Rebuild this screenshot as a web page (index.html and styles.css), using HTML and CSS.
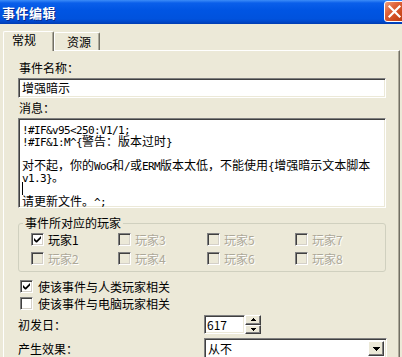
FILE: index.html
```html
<!DOCTYPE html>
<html>
<head>
<meta charset="utf-8">
<link rel="stylesheet" href="styles.css">
</head>
<body>
<div class="window">
  <div class="titlebar">
    <span class="title">事件编辑</span>
    <span class="close"><svg width="21" height="21" viewBox="0 0 21 21"><path d="M5.5 5.5 L15.5 15.5 M15.5 5.5 L5.5 15.5" stroke="#fff" stroke-width="2.2" stroke-linecap="square"/></svg></span>
  </div>
  <div class="body">
    <div class="tabs">
      <div class="tab active">常规</div>
      <div class="tab">资源</div>
    </div>
    <div class="panel">
      <div class="label">事件名称：</div>
      <div class="field input">增强暗示</div>
      <div class="label">消息：</div>
      <div class="field memo"><div class="ln"><span class="a">!#IF&amp;v95&lt;250:V1/1;</span></div><div class="ln"><span class="a">!#IF&amp;1:M^{</span>警告：版本过时<span class="a">}</span></div><div class="ln"></div><div class="ln">对不起，你的<span class="a">WoG</span>和<span class="a">/</span>或<span class="a">ERM</span>版本太低，不能使用<span class="a">{</span>增强暗示文本脚本</div><div class="ln"><span class="a">v1.3}</span>。</div><div class="ln"><span class="caret"></span></div><div class="ln">请更新文件。<span class="a">^;</span></div></div>
      <fieldset class="group">
        <legend>事件所对应的玩家</legend>
        <div class="grid">
          <label class="cb"><span class="box checked"><svg width="7" height="7" viewBox="0 0 7 7"><path d="M0 2 L0 4.5 L2 6.5 L3 6.5 L7 2.5 L7 0 L2.5 4.5 Z" fill="#000"/></svg></span>玩家1</label>
          <label class="cb dis"><span class="box"></span>玩家3</label>
          <label class="cb dis"><span class="box"></span>玩家5</label>
          <label class="cb dis"><span class="box"></span>玩家7</label>
          <label class="cb dis"><span class="box"></span>玩家2</label>
          <label class="cb dis"><span class="box"></span>玩家4</label>
          <label class="cb dis"><span class="box"></span>玩家6</label>
          <label class="cb dis"><span class="box"></span>玩家8</label>
        </div>
      </fieldset>
      <label class="cb solo first"><span class="box checked"><svg width="7" height="7" viewBox="0 0 7 7"><path d="M0 2 L0 4.5 L2 6.5 L3 6.5 L7 2.5 L7 0 L2.5 4.5 Z" fill="#000"/></svg></span>使该事件与人类玩家相关</label>
      <label class="cb solo"><span class="box"></span>使该事件与电脑玩家相关</label>
      <div class="row r1">
        <span class="rlabel">初发日：</span>
        <div class="spin">
          <div class="field num">617</div>
          <div class="spinbtns">
            <span class="sb"><svg width="5" height="3" viewBox="0 0 5 3"><path d="M2 0h1v1h1v1h1v1H0V2h1V1h1z" fill="#000"/></svg></span>
            <span class="sb"><svg width="5" height="3" viewBox="0 0 5 3"><path d="M0 0h5v1H4v1H3v1H2V2H1V1H0z" fill="#000"/></svg></span>
          </div>
        </div>
      </div>
      <div class="row r2">
        <span class="rlabel">产生效果：</span>
        <div class="field combo"><span class="ctext">从不</span><span class="dd"><svg width="7" height="4" viewBox="0 0 7 4"><path d="M0 0h7v1H6v1H5v1H4v1H3V3H2V2H1V1H0z" fill="#000"/></svg></span></div>
      </div>
    </div>
  </div>
</div>
</body>
</html>
```
FILE: styles.css
```css
* { box-sizing: border-box; }
html, body { margin: 0; padding: 0; }
body {
  width: 402px; height: 357px; overflow: hidden;
  font-family: "Noto Sans CJK SC", "Liberation Sans", sans-serif;
  font-size: 12px; color: #000;
  background: #ECE9D8;
}
.window { width: 402px; height: 357px; overflow: hidden; background: #ECE9D8; }
.titlebar {
  height: 24px; position: relative;
  background: linear-gradient(#3C8CF8 0px, #0A5FEA 3px, #0055E3 10px, #0052DD 19px, #0046C8 22px, #003BB0 24px);
  display: flex; align-items: center;
}
.title {
  color: #fff; font-weight: bold; font-size: 13px; line-height: 16px;
  margin-left: 2px; margin-top: 1px; letter-spacing: 0.5px;
  text-shadow: 1px 1px 0 #0A2A8A;
}
.close {
  position: absolute; left: 384px; top: 1px; width: 21px; height: 21px;
  border: 1px solid #fff; border-radius: 3px;
  background: linear-gradient(135deg, #EFA07D 0%, #E0623A 35%, #CC4A1E 70%, #B83A12 100%);
  display: flex; align-items: center; justify-content: center;
}
.close svg { position: absolute; left: -1px; top: -1px; }
.tabs { display: flex; align-items: flex-end; height: 26px; padding-left: 3px; position: relative; z-index: 1; }
.tab {
  height: 18px; line-height: 16px;
  border-left: 1px solid #fff; border-top: 1px solid #fff; border-right: 1px solid #716F64;
  border-radius: 2px 2px 0 0;
  box-shadow: inset -1px 0 0 #ACA899;
  text-align: center;
}
.tab:nth-child(2) { width: 46px; padding-left: 4px; padding-top: 1px; }
.tab.active {
  width: 51px; height: 20px; margin-bottom: -1px; background: #ECE9D8;
  padding-right: 9px; line-height: 15px;
}
.panel {
  height: 307px; width: 397px; margin-left: 3px;
  border-top: 1px solid #fff; border-left: 1px solid #fff; border-right: 1px solid #716F64;
  box-shadow: inset -1px 0 0 #ACA899;
  padding: 10px 0 0 14px;
}
.label { line-height: 14px; height: 14px; margin-left: 1px; }
.field {
  background: #fff;
  border: 1px solid; border-color: #808080 #fff #fff #808080;
  box-shadow: inset 1px 1px 0 #404040, inset -1px -1px 0 #ECE9D8;
}
.input { width: 368px; height: 20px; margin: 3px 0 3px 0; padding: 2px 0 0 3px; line-height: 14px; }
.memo { width: 368px; height: 90px; margin-top: 3px; padding: 4px 0 0 3px; white-space: pre; overflow: hidden; }
.ln { height: 12px; line-height: 12px; }
.a { font-family: "DejaVu Sans Mono", "Liberation Mono", monospace; font-size: 11px; letter-spacing: -0.62px; }
.caret { display: inline-block; width: 1px; height: 13px; background: #000; vertical-align: top; margin-top: -1px; }
.group {
  margin: 8px 0 0 0; width: 368px; height: 56px; padding: 0;
  border: 1px solid #D0D0BF; border-radius: 3px;
}
.group legend { padding: 0 2px; margin-left: 4px; line-height: 14px; }
.grid { display: grid; grid-template-columns: 87px 89px 88px 60px; row-gap: 6px; margin: 3px 0 0 12px; }
.cb { display: flex; align-items: center; height: 13px; line-height: 13px; }
.box {
  width: 13px; height: 13px; flex: none; margin-right: 4px;
  border: 1px solid; border-color: #808080 #fff #fff #808080;
  box-shadow: inset 1px 1px 0 #404040, inset -1px -1px 0 #D4D0C8;
  background: #fff; display: flex; align-items: center; justify-content: center;
}
.dis { color: #ACA899; text-shadow: 1px 1px 0 #fff; }
.dis .box { background: #ECE9D8; }
.solo { margin-left: 2px; }
.solo .box { margin-right: 5px; }
.first { margin-top: 8px; }
.solo + .solo { margin-top: 4px; }
.row { display: flex; align-items: center; }
.rlabel { width: 186px; }
.r1 { margin-top: 5px; }
.r2 { margin-top: 4px; }
.spin { display: flex; }
.num { width: 41px; height: 19px; padding: 2px 0 0 2px; line-height: 14px; }
.spinbtns { display: flex; flex-direction: column; width: 16px; height: 19px; }
.sb {
  flex: 1; background: #ECE9D8;
  border: 1px solid; border-color: #fff #404040 #404040 #fff;
  box-shadow: inset -1px -1px 0 #808080;
  display: flex; align-items: center; justify-content: center;
}
.combo { width: 183px; height: 21px; display: flex; align-items: center; justify-content: space-between; padding: 0 2px 0 3px; }
.dd {
  width: 16px; height: 15px; background: #ECE9D8;
  border: 1px solid; border-color: #fff #404040 #404040 #fff;
  box-shadow: inset -1px -1px 0 #808080;
  display: flex; align-items: center; justify-content: center;
}
```
